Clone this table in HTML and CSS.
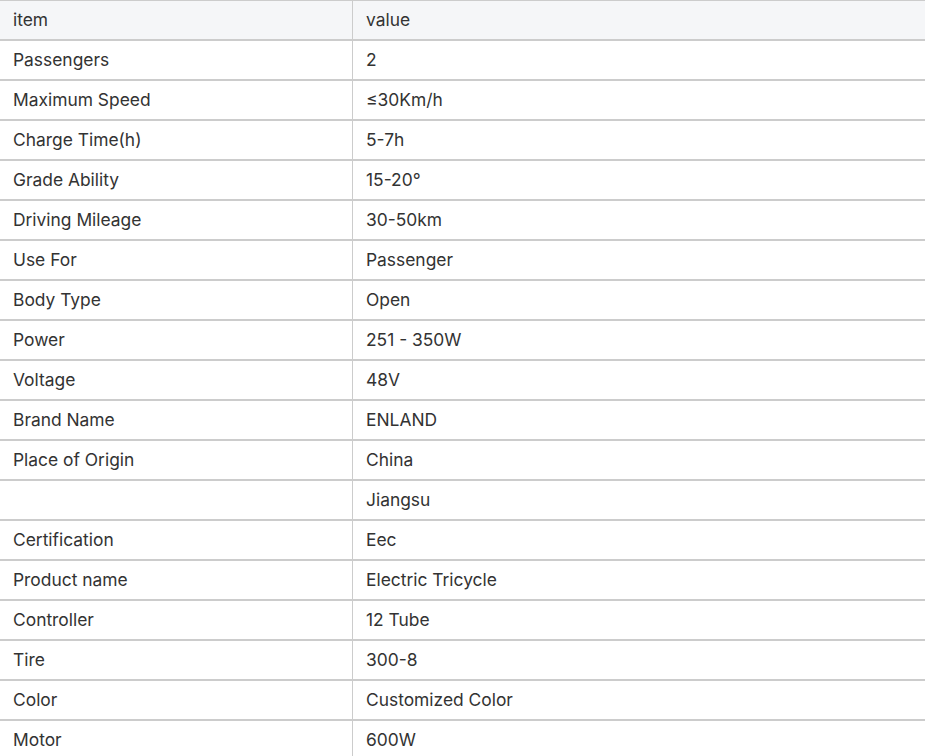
FILE: index.html
```html
<!DOCTYPE html>
<html>
<head>
<meta charset="utf-8">
<link rel="stylesheet" href="styles.css">
</head>
<body>
<table class="spec">
<thead>
<tr><td class="k">item</td><td class="v">value</td></tr>
</thead>
<tbody>
<tr><td class="k">Passengers</td><td class="v">2</td></tr>
<tr><td class="k">Maximum Speed</td><td class="v">≤30Km/h</td></tr>
<tr><td class="k">Charge Time(h)</td><td class="v">5-7h</td></tr>
<tr><td class="k">Grade Ability</td><td class="v">15-20°</td></tr>
<tr><td class="k">Driving Mileage</td><td class="v">30-50km</td></tr>
<tr><td class="k">Use For</td><td class="v">Passenger</td></tr>
<tr><td class="k">Body Type</td><td class="v">Open</td></tr>
<tr><td class="k">Power</td><td class="v">251 - 350W</td></tr>
<tr><td class="k">Voltage</td><td class="v">48V</td></tr>
<tr><td class="k">Brand Name</td><td class="v">ENLAND</td></tr>
<tr><td class="k">Place of Origin</td><td class="v">China</td></tr>
<tr><td class="k"></td><td class="v">Jiangsu</td></tr>
<tr><td class="k">Certification</td><td class="v">Eec</td></tr>
<tr><td class="k">Product name</td><td class="v">Electric Tricycle</td></tr>
<tr><td class="k">Controller</td><td class="v">12 Tube</td></tr>
<tr><td class="k">Tire</td><td class="v">300-8</td></tr>
<tr><td class="k">Color</td><td class="v">Customized Color</td></tr>
<tr><td class="k">Motor</td><td class="v">600W</td></tr>
</tbody>
</table>
</body>
</html>
```
FILE: styles.css
```css
html, body {
  margin: 0;
  padding: 0;
  background: #fff;
}
.spec {
  width: 925px;
  border-collapse: separate;
  border-spacing: 0;
  table-layout: fixed;
  font-family: Inter, "Noto Sans", sans-serif;
  font-size: 17.4px;
  color: #333;
}
.spec td {
  box-sizing: border-box;
  padding: 9px 13px;
  line-height: 20px;
  height: 40px;
  border-top: 1px solid #cccccc;
  border-bottom: 1px solid #cccccc;
  vertical-align: middle;
  white-space: nowrap;
}
.spec td.k {
  width: 352px;
}
.spec td.v {
  border-left: 1px solid #cccccc;
}
.spec thead td {
  background: #f5f6f8;
}
```
